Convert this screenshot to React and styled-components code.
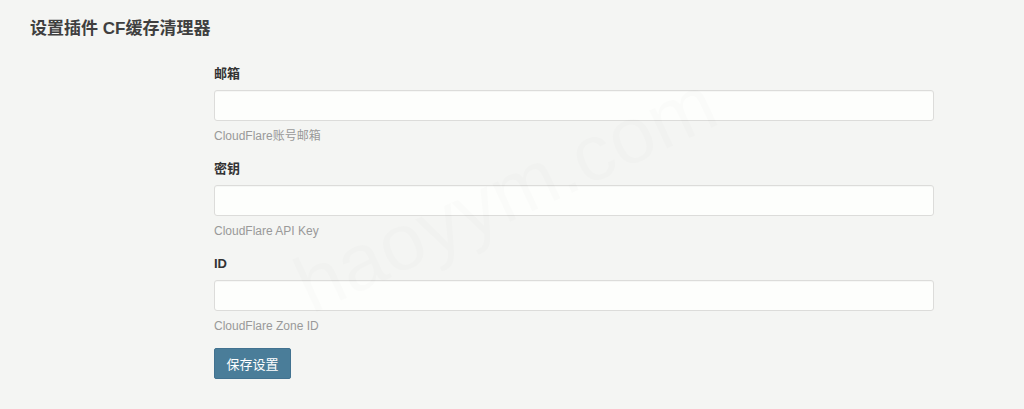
import React from 'react';
import styled, { createGlobalStyle } from 'styled-components';

const GlobalStyle = createGlobalStyle`
  html, body {
    margin: 0;
    padding: 0;
    background: #f4f5f3;
  }
  body {
    font-family: "Liberation Sans", "Noto Sans CJK SC", sans-serif;
  }
`;

const Page = styled.div`
  position: relative;
  width: 1024px;
  height: 409px;
  overflow: hidden;
  background: #f4f5f3;
  padding: 18px 0 0 30px;
  box-sizing: border-box;
`;

const Title = styled.h1`
  margin: 0;
  font-size: 17px;
  line-height: 22px;
  font-weight: bold;
  color: #3f3f3f;
`;

const Form = styled.form`
  display: flex;
  flex-direction: column;
  width: 720px;
  margin: 25px 0 0 184px;
`;

const Field = styled.div`
  display: flex;
  flex-direction: column;
  margin-bottom: 16px;
`;

const Label = styled.label`
  font-size: 13px;
  font-weight: bold;
  line-height: 18px;
  color: #333;
  margin-bottom: 7px;
`;

const Input = styled.input`
  box-sizing: border-box;
  width: 720px;
  height: 31px;
  background: #fdfefc;
  border: 1px solid #dcdcda;
  border-radius: 3px;
  box-shadow: inset 0 1px 1px rgba(0, 0, 0, 0.03);
  outline: none;
`;

const Help = styled.p`
  margin: 7px 0 0;
  font-size: 12px;
  line-height: 16px;
  color: #999;
`;

const Button = styled.button`
  align-self: flex-start;
  margin-top: -2px;
  width: 77px;
  height: 31px;
  padding: 0;
  background: #4a7d99;
  border: 1px solid #427290;
  border-radius: 2px;
  color: #fff;
  font-family: "Liberation Sans", "Noto Sans CJK SC", sans-serif;
  font-size: 13px;
`;

const Watermark = styled.div`
  position: absolute;
  left: 300px;
  top: 250px;
  font-family: "Liberation Sans", sans-serif;
  font-size: 80px;
  line-height: 80px;
  color: rgba(0, 0, 0, 0.012);
  transform: rotate(-25deg);
  transform-origin: left center;
  pointer-events: none;
  white-space: nowrap;
`;

const fields = [
  { label: '邮箱', help: 'CloudFlare账号邮箱' },
  { label: '密钥', help: 'CloudFlare API Key' },
  { label: 'ID', help: 'CloudFlare Zone ID' },
];

const App = () => (
  <>
    <GlobalStyle />
    <Page>
      <Title>设置插件 CF缓存清理器</Title>
      <Form onSubmit={(e) => e.preventDefault()}>
        {fields.map((f) => (
          <Field key={f.label}>
            <Label>{f.label}</Label>
            <Input type="text" />
            <Help>{f.help}</Help>
          </Field>
        ))}
        <Button type="submit">保存设置</Button>
      </Form>
      <Watermark>haoyym.com</Watermark>
    </Page>
  </>
);

export default App;
